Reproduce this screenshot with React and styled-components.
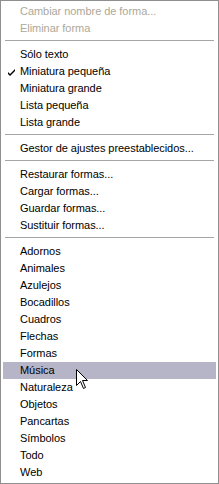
import React from 'react';
import styled, { createGlobalStyle } from 'styled-components';

const GlobalStyle = createGlobalStyle`
  html, body {
    margin: 0;
    padding: 0;
    background: #ffffff;
  }
`;

const sections = [
  [
    { label: 'Cambiar nombre de forma...', disabled: true },
    { label: 'Eliminar forma', disabled: true },
  ],
  [
    { label: 'Sólo texto' },
    { label: 'Miniatura pequeña', checked: true },
    { label: 'Miniatura grande' },
    { label: 'Lista pequeña' },
    { label: 'Lista grande' },
  ],
  [{ label: 'Gestor de ajustes preestablecidos...' }],
  [
    { label: 'Restaurar formas...' },
    { label: 'Cargar formas...' },
    { label: 'Guardar formas...' },
    { label: 'Sustituir formas...' },
  ],
  [
    { label: 'Adornos' },
    { label: 'Animales' },
    { label: 'Azulejos' },
    { label: 'Bocadillos' },
    { label: 'Cuadros' },
    { label: 'Flechas' },
    { label: 'Formas' },
    { label: 'Música', active: true, cursor: true },
    { label: 'Naturaleza' },
    { label: 'Objetos' },
    { label: 'Pancartas' },
    { label: 'Símbolos' },
    { label: 'Todo' },
    { label: 'Web' },
  ],
];

const CheckIcon = () => (
  <svg width="8" height="8" viewBox="0 0 8 8">
    <path d="M0 4 L2 6 L7 1 L7 3 L2 8 L0 6 Z" fill="#000" />
  </svg>
);

const Pointer = () => (
  <svg width="13" height="21" viewBox="0 0 13 21">
    <path
      d="M0.5 0.5 L0.5 16.5 L4.5 12.5 L7.5 19.5 L9.5 18.5 L6.5 11.5 L11.5 11.5 Z"
      fill="#fff"
      stroke="#000"
      strokeWidth="1"
    />
  </svg>
);

const App = () => {
  return (
    <>
      <GlobalStyle />
      <Menu>
        {sections.map((items, i) => (
          <React.Fragment key={i}>
            {i > 0 && <Separator />}
            {items.map((item) => (
              <Item key={item.label} disabled={item.disabled} active={item.active}>
                <CheckSlot>{item.checked && <CheckIcon />}</CheckSlot>
                <Label>{item.label}</Label>
                {item.cursor && (
                  <CursorSpot>
                    <Pointer />
                  </CursorSpot>
                )}
              </Item>
            ))}
          </React.Fragment>
        ))}
      </Menu>
    </>
  );
};

export default App;

const Menu = styled.div`
  box-sizing: border-box;
  width: 219px;
  height: 484px;
  border: 1px solid #8f8f8f;
  background: #ffffff;
  padding: 2px 2px;
  display: flex;
  flex-direction: column;
  font-family: 'Liberation Sans', Arial, sans-serif;
  font-size: 11px;
`;

const Item = styled.div`
  position: relative;
  height: 17px;
  display: flex;
  align-items: center;
  color: ${(props) => (props.disabled ? '#aca899' : '#000000')};
  background: ${(props) => (props.active ? '#b6b5c8' : 'transparent')};
`;

const CheckSlot = styled.div`
  width: 16px;
  display: flex;
  justify-content: center;
  padding-left: 1px;
  padding-top: 1px;
`;

const Label = styled.span`
  white-space: nowrap;
  line-height: 17px;
  letter-spacing: -0.05px;
`;

const Separator = styled.div`
  height: 1px;
  margin: 3px 2px 5px 2px;
  background: #a6a6a6;
`;

const CursorSpot = styled.div`
  position: absolute;
  left: 73px;
  top: 7px;
  line-height: 0;
  z-index: 2;
`;
